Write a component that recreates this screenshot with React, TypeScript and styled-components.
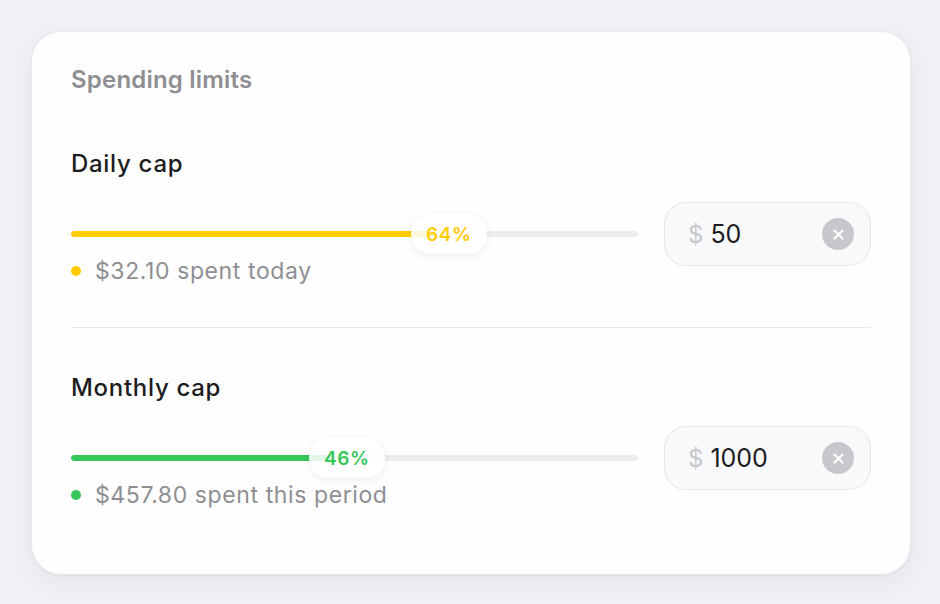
import styled, { createGlobalStyle } from "styled-components";

const GlobalStyle = createGlobalStyle`
	html, body {
		margin: 0;
		padding: 0;
		background: #f1f0f5;
		font-family: Inter, "Noto Sans", "Liberation Sans", sans-serif;
		-webkit-font-smoothing: antialiased;
	}
`;

const Page = styled.div`
	padding: 31px;
	height: 604px;
	box-sizing: border-box;
`;

const Card = styled.section`
	width: 880px;
	height: 544px;
	box-sizing: border-box;
	background: #fefefe;
	border: 1px solid #e8e8ec;
	border-radius: 30px;
	padding: 34px 39px 24px;
	box-shadow: 0 8px 24px rgba(60, 60, 90, 0.06), 0 1px 3px rgba(0, 0, 0, 0.04);
`;

const Title = styled.h2`
	margin: 0 0 10px;
	font-size: 24px;
	line-height: 28px;
	font-weight: 600;
	letter-spacing: 0.2px;
	color: #8e8e93;
`;

const Section = styled.div<{ $divider?: boolean }>`
	padding: 46px 0 44px;
	border-bottom: ${({ $divider }) => ($divider ? "1px solid #e8e8ec" : "none")};
`;

const Label = styled.div`
	font-size: 24px;
	line-height: 28px;
	font-weight: 500;
	letter-spacing: 0.7px;
	color: #1c1c1e;
	margin-bottom: 24px;
`;

const Row = styled.div`
	display: flex;
	align-items: flex-start;
	gap: 26px;
`;

const Meter = styled.div`
	flex: 1;
	padding-top: 12px;
	display: flex;
	flex-direction: column;
	gap: 5px;
`;

const TrackArea = styled.div`
	position: relative;
	height: 40px;
	display: flex;
	align-items: center;
`;

const Track = styled.div`
	width: 100%;
	height: 6px;
	border-radius: 3px;
	background: #ececee;
	overflow: hidden;
`;

const Fill = styled.div<{ $color: string }>`
	height: 100%;
	border-radius: 3px;
	background: ${({ $color }) => $color};
`;

const Pill = styled.div<{ $color: string }>`
	position: absolute;
	top: 0;
	width: 76px;
	height: 40px;
	border-radius: 20px;
	background: rgba(255, 255, 255, 0.86);
	box-shadow: 0 2px 8px rgba(0, 0, 0, 0.07);
	display: flex;
	align-items: center;
	justify-content: center;
	font-size: 19px;
	font-weight: 600;
	letter-spacing: 0.6px;
	color: ${({ $color }) => $color};
`;

const Legend = styled.div`
	display: flex;
	align-items: center;
	gap: 14px;
	font-size: 23px;
	line-height: 24px;
	letter-spacing: 0.6px;
	color: #8e8e93;
`;

const Dot = styled.span<{ $color: string }>`
	width: 10px;
	height: 10px;
	flex-shrink: 0;
	border-radius: 50%;
	background: ${({ $color }) => $color};
`;

const AmountBox = styled.div`
	width: 207px;
	height: 64px;
	box-sizing: border-box;
	border: 1.5px solid #e5e5ea;
	border-radius: 22px;
	background: #f9f9fb;
	display: flex;
	align-items: center;
	padding: 0 16px 0 23px;
`;

const Currency = styled.span`
	font-size: 24px;
	color: #c7c7cc;
	margin-right: 7px;
`;

const Amount = styled.span`
	flex: 1;
	font-size: 25px;
	color: #1c1c1e;
`;

const ClearButton = styled.button`
	width: 32px;
	height: 32px;
	border-radius: 50%;
	border: none;
	padding: 0;
	background: #c7c7cc;
	display: flex;
	align-items: center;
	justify-content: center;
`;

type CapProps = {
	label: string;
	pct: number;
	color: string;
	spent: string;
	amount: string;
	divider?: boolean;
};

const Cap = ({ label, pct, color, spent, amount, divider }: CapProps) => (
	<Section $divider={divider}>
		<Label>{label}</Label>
		<Row>
			<Meter>
				<TrackArea>
					<Track>
						<Fill $color={color} style={{ width: `${pct}%` }} />
					</Track>
					<Pill $color={color} style={{ left: `calc(${pct}% - 23px)` }}>
						{pct}%
					</Pill>
				</TrackArea>
				<Legend>
					<Dot $color={color} />
					{spent}
				</Legend>
			</Meter>
			<AmountBox>
				<Currency>$</Currency>
				<Amount>{amount}</Amount>
				<ClearButton aria-label="Clear">
					<svg width="11" height="11" viewBox="0 0 11 11">
						<path d="M1.5 1.5l8 8M9.5 1.5l-8 8" stroke="#fff" strokeWidth="2.2" strokeLinecap="round" />
					</svg>
				</ClearButton>
			</AmountBox>
		</Row>
	</Section>
);

const App = () => {
	return (
		<>
			<GlobalStyle />
			<Page>
				<Card>
					<Title>Spending limits</Title>
					<Cap label="Daily cap" pct={64} color="#ffcc00" spent="$32.10 spent today" amount="50" divider />
					<Cap label="Monthly cap" pct={46} color="#34c759" spent="$457.80 spent this period" amount="1000" />
				</Card>
			</Page>
		</>
	);
};

export default App;
